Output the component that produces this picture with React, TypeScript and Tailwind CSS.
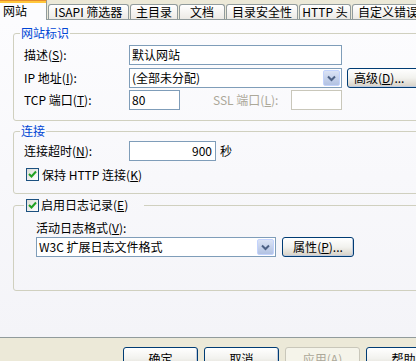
import React from "react";

const Acc = ({ pre, k, post = "" }: { pre: string; k: string; post?: string }) => (
  <span className="whitespace-nowrap">
    {pre}(<u>{k}</u>){post}
  </span>
);

const Check = () => (
  <span className="flex h-[13px] w-[13px] shrink-0 items-center justify-center border border-[#1c5180] bg-gradient-to-br from-[#dcdcd7] to-white">
    <svg width="9" height="9" viewBox="0 0 9 9">
      <path d="M1 4 L3.5 6.5 L8 1.5" fill="none" stroke="#21a121" strokeWidth="2" />
    </svg>
  </span>
);

const Arrow = () => (
  <span className="flex h-full w-[17px] shrink-0 items-center justify-center rounded-[2px] border border-[#c3d3fd] bg-gradient-to-b from-[#dbe3f5] to-[#b2c2e2]">
    <svg width="9" height="7" viewBox="0 0 9 7">
      <path d="M1 1.5 L4.5 5 L8 1.5" fill="none" stroke="#4d6185" strokeWidth="2" />
    </svg>
  </span>
);

const Btn = ({ children, w = "w-[75px]", h = "h-[23px]", disabled = false }: { children: React.ReactNode; w?: string; h?: string; disabled?: boolean }) =>
  disabled ? (
    <div className={`${w} ${h} flex shrink-0 items-center justify-center rounded-[3px] border border-[#c9c7ba] bg-[#f5f4ea] text-[#aca899]`}>
      {children}
    </div>
  ) : (
    <div className={`${w} ${h} flex shrink-0 items-center justify-center rounded-[3px] border border-[#003c74] bg-gradient-to-b from-white via-[#f2f2ee] to-[#d6d0c5] shadow-[inset_-1px_-1px_0_#c1ccdf]`}>
      {children}
    </div>
  );

const Tab = ({ w, children }: { w: string; children: React.ReactNode }) => (
  <div className={`${w} ml-[1px] mt-[4px] flex h-[15px] shrink-0 items-center justify-center whitespace-nowrap rounded-t-[3px] border border-b-0 border-[#919b9c] bg-gradient-to-b from-white to-[#eceae5]`}>
    {children}
  </div>
);

export default function App() {
  return (
    <div className="h-[361px] w-[416px] overflow-hidden bg-[#ece9d8] font-['Noto_Sans_CJK_SC',sans-serif] text-[12px] leading-[14px] text-black">
      {/* tabs */}
      <div className="flex h-[19px] items-start">
        <div className="relative z-10 flex h-[20px] w-[47px] shrink-0 flex-col border-r border-t border-r-[#919b9c] border-t-[#e68b2c] bg-[#fcfcfe]">
          <div className="h-[2px] bg-[#ffc73c]" />
          <div className="pl-[3px] pt-[1px]">网站</div>
        </div>
        <Tab w="w-[81px]">ISAPI 筛选器</Tab>
        <Tab w="w-[48px]">主目录</Tab>
        <Tab w="w-[46px]">文档</Tab>
        <Tab w="w-[72px]">目录安全性</Tab>
        <Tab w="w-[52px]">HTTP 头</Tab>
        <Tab w="w-[72px]">自定义错误</Tab>
      </div>

      {/* panel */}
      <div className="h-[319px] w-[416px] overflow-hidden border-y border-[#919b9c] bg-gradient-to-b from-[#fcfcfe] to-[#f4f4f8]">
        {/* group 1 */}
        <fieldset className="ml-[13px] mt-[6px] w-[420px] rounded-[3px] border border-[#d0d0bf]">
          <legend className="ml-[6px] px-[1px] leading-[14px] text-[#0046d5]">网站标识</legend>
          <div className="pb-[10px] pl-[10px] pt-[5px]">
            <div className="flex h-[20px] items-center">
              <div className="w-[105px]"><Acc pre="描述" k="S" post=":" /></div>
              <div className="flex h-[20px] w-[213px] items-center border border-[#7f9db9] bg-white px-[2px]">默认网站</div>
            </div>
            <div className="mt-[3px] flex h-[20px] items-center">
              <div className="w-[105px]"><Acc pre="IP 地址" k="I" post=":" /></div>
              <div className="flex h-[20px] w-[213px] items-center border border-[#7f9db9] bg-white p-[1px] pl-[2px]">
                <span className="flex-1">(全部未分配)</span>
                <Arrow />
              </div>
              <div className="ml-[5px]">
                <Btn w="w-[75px]" h="h-[20px]">
                  <span className="w-full pl-[6px]"><Acc pre="高级" k="D" post="..." /></span>
                </Btn>
              </div>
            </div>
            <div className="mt-[2px] flex h-[20px] items-center">
              <div className="w-[105px]"><Acc pre="TCP 端口" k="T" post=":" /></div>
              <div className="flex h-[20px] w-[51px] items-center border border-[#7f9db9] bg-white px-[2px]">80</div>
              <div className="ml-[33px] w-[78px] text-[#aca899]"><Acc pre="SSL 端口" k="L" post=":" /></div>
              <div className="h-[20px] w-[51px] border border-[#c9c7ba] bg-white" />
            </div>
          </div>
        </fieldset>

        {/* group 2 */}
        <fieldset className="ml-[13px] mt-[3px] w-[420px] rounded-[3px] border border-[#d0d0bf]">
          <legend className="ml-[6px] px-[1px] leading-[14px] text-[#0046d5]">连接</legend>
          <div className="pb-[12px] pl-[10px] pt-[3px]">
            <div className="flex h-[20px] items-center">
              <div className="w-[105px]"><Acc pre="连接超时" k="N" post=":" /></div>
              <div className="flex h-[20px] w-[87px] items-center justify-end border border-[#7f9db9] bg-white pr-[3px]">900</div>
              <span className="ml-[4px]">秒</span>
            </div>
            <div className="mt-[7px] flex h-[13px] items-center">
              <span className="ml-[2px]"><Check /></span>
              <span className="ml-[3px]"><Acc pre="保持 HTTP 连接" k="K" /></span>
            </div>
          </div>
        </fieldset>

        {/* group 3 */}
        <fieldset className="ml-[13px] mt-[4px] w-[420px] rounded-[3px] border border-[#d0d0bf]">
          <legend className="ml-[10px] pl-[2px] pr-[16px]">
            <span className="flex h-[14px] items-center">
              <Check />
              <span className="ml-[2px]"><Acc pre="启用日志记录" k="E" /></span>
            </span>
          </legend>
          <div className="pb-[33px] pl-[22px] pt-[9px]">
            <div className="h-[14px]"><Acc pre="活动日志格式" k="V" post=":" /></div>
            <div className="mt-[2px] flex h-[20px] items-center">
              <div className="flex h-[20px] w-[240px] items-center border border-[#7f9db9] bg-white p-[1px] pl-[2px]">
                <span className="flex-1">W3C 扩展日志文件格式</span>
                <Arrow />
              </div>
              <div className="ml-[6px]">
                <Btn w="w-[72px]" h="h-[20px]">
                  <Acc pre="属性" k="P" post="..." />
                </Btn>
              </div>
            </div>
          </div>
        </fieldset>
      </div>

      {/* bottom buttons */}
      <div className="mt-[9px] flex gap-[6px] pl-[123px]">
        <Btn>确定</Btn>
        <Btn>取消</Btn>
        <Btn disabled>
          <Acc pre="应用" k="A" />
        </Btn>
        <Btn>帮助</Btn>
      </div>
    </div>
  );
}
